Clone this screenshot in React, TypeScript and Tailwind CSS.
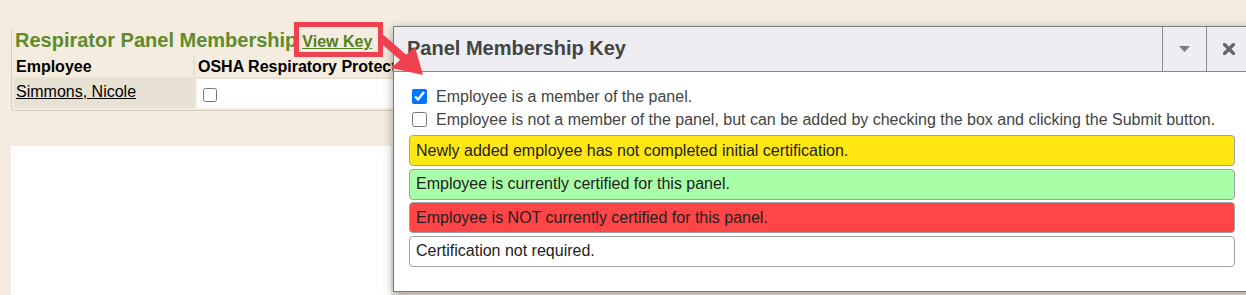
import React, { FC } from 'react';

type KeyRowProp = {
	label: string;
	tone: string;
};

const KeyRow: FC<KeyRowProp> = ({ label, tone }) => (
	<div
		className={`h-[31px] flex items-center px-[6px] rounded-[4px] border border-[#a0a0a0] text-[16px] text-[#222] ${tone}`}
	>
		{label}
	</div>
);

const MembershipKey: FC = () => (
	<div className="absolute left-[393px] top-[26px] w-[880px] h-[266px] bg-white border border-[#7a7a7a] shadow-[0_3px_10px_rgba(0,0,0,0.35)]">
		<div className="h-[45px] flex bg-[#eeedf2] border-b border-[#8a8a8a]">
			<div className="flex-1 flex items-center pl-[13px] pb-[2px] text-[20px] font-bold text-[#444]">
				Panel Membership Key
			</div>
			<div className="w-[44px] flex items-center justify-center border-l border-[#8a8a8a]">
				<svg width="11" height="6" viewBox="0 0 11 6">
					<path d="M0 0 H11 L5.5 6 Z" fill="#7a7a7a" />
				</svg>
			</div>
			<div className="w-[44px] flex items-center justify-center border-l border-[#8a8a8a] mr-[22px]">
				<svg width="12" height="12" viewBox="0 0 12 12">
					<path
						d="M1.5 1.5 L10.5 10.5 M10.5 1.5 L1.5 10.5"
						stroke="#666"
						strokeWidth="3.2"
						strokeLinecap="round"
					/>
				</svg>
			</div>
		</div>

		<div className="pt-[13px] pl-[15px] w-[842px] text-[16px] text-[#444]">
			<label className="flex items-center h-[23px] pl-[3px] gap-[9px] whitespace-nowrap">
				<input type="checkbox" defaultChecked className="w-[15px] h-[15px] m-0 accent-[#0075ff]" />
				Employee is a member of the panel.
			</label>
			<label className="flex items-center h-[23px] pl-[3px] gap-[9px] whitespace-nowrap">
				<input type="checkbox" className="w-[15px] h-[15px] m-0" />
				Employee is not a member of the panel, but can be added by checking the box and clicking the Submit button.
			</label>
			<div className="mt-[4px] flex flex-col gap-[2.5px] w-[826px]">
				<KeyRow tone="bg-[#ffe714]" label="Newly added employee has not completed initial certification." />
				<KeyRow tone="bg-[#a8ffa8]" label="Employee is currently certified for this panel." />
				<KeyRow tone="bg-[#ff4545]" label="Employee is NOT currently certified for this panel." />
				<KeyRow tone="bg-white" label="Certification not required." />
			</div>
		</div>
	</div>
);

const App: FC = () => (
	<div className="relative w-[1246px] h-[295px] overflow-hidden bg-[#f3ecdf] font-['Liberation_Sans',Arial,sans-serif]">
		<div className="pt-[43px] pl-[11px]">
			<div className="w-[440px] border border-t-0 border-[#d3cec4] rounded-b-[4px] pl-[2px] pb-[2px]">
				<div className="-mt-[14px] h-[26px] flex items-baseline pl-[1px] leading-[23px]">
					<span className="text-[20px] font-bold text-[#5e8b2b]">Respirator Panel Membership</span>
					<span className="ml-[5px] text-[16px] font-bold text-[#557f1f] underline">View Key</span>
				</div>
				<div className="flex h-[24px] text-[16px] font-bold text-black">
					<div className="w-[181px] pl-[2px] pt-[3px] leading-[18px] border-r-2 border-b-2 border-[#e9e2d2]">
						Employee
					</div>
					<div className="flex-1 pl-[3px] pt-[3px] leading-[18px] border-b-2 border-[#e9e2d2] whitespace-nowrap">
						OSHA Respiratory Protection
					</div>
				</div>
				<div className="flex h-[29px]">
					<div className="w-[181px] bg-[#e8e2d4] pl-[2px] pt-[4px] text-[16px] leading-[18px] text-black underline">
						Simmons, Nicole
					</div>
					<div className="flex-1 bg-white ml-[2px] pl-[6px] pt-[6px]">
						<input type="checkbox" className="w-[14px] h-[14px] m-0" />
					</div>
				</div>
			</div>
			<div className="mt-[35px] w-[380px] h-[160px] bg-white" />
		</div>

		<MembershipKey />

		<div className="absolute left-[294px] top-[22px] w-[89px] h-[35px] border-[5px] border-[#ef4150]" />
		<svg className="absolute left-[370px] top-[28px]" width="60" height="52" viewBox="370 28 60 52">
			<path d="M381 38 L405 59" stroke="#ef4150" strokeWidth="8" />
			<path d="M391 68 L415 47 L423 75 Z" fill="#ef4150" />
		</svg>
	</div>
);

export default App;
